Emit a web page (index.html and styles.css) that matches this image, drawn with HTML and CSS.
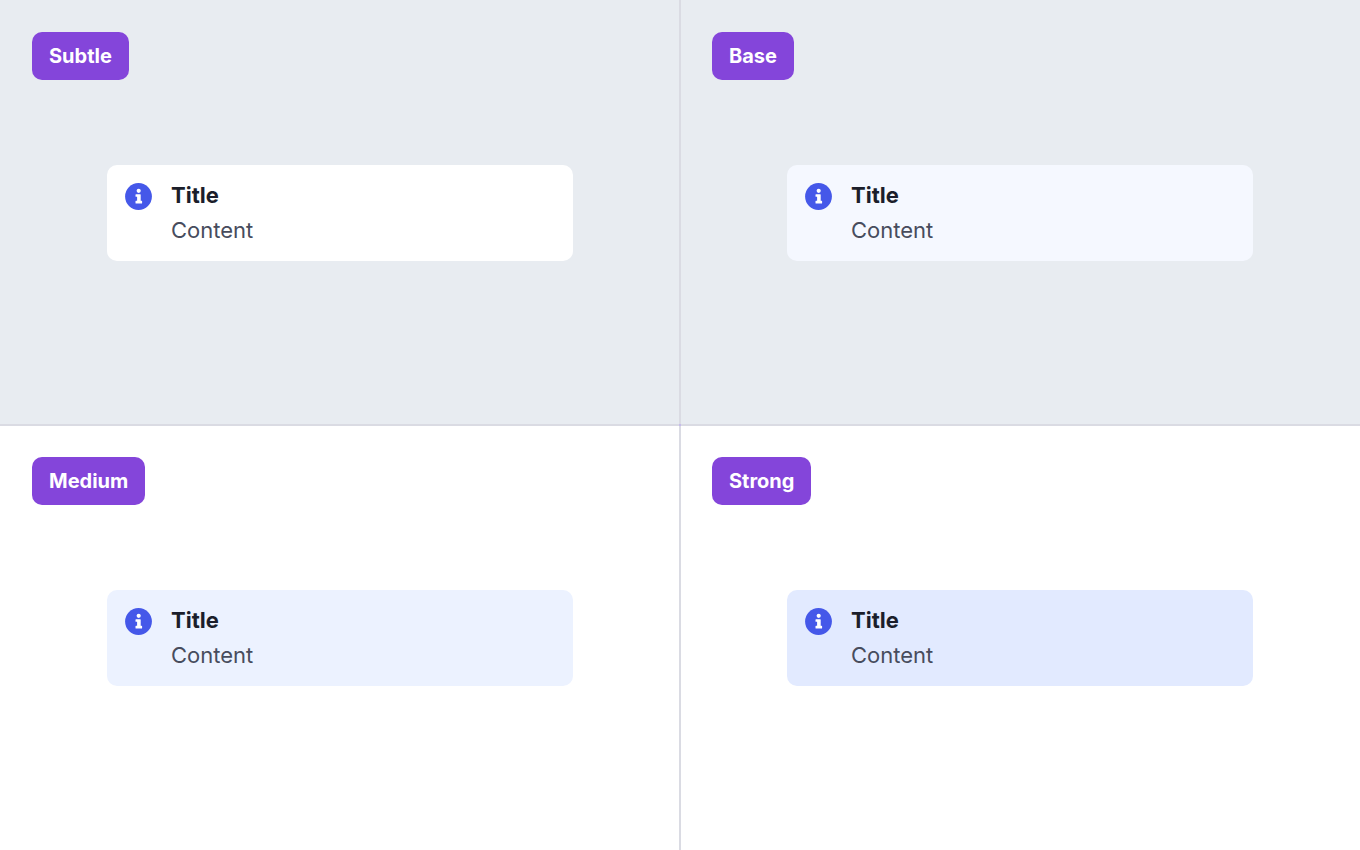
FILE: index.html
```html
<!DOCTYPE html>
<html lang="en">
<head>
<meta charset="utf-8">
<title>Alert emphasis levels</title>
<link rel="stylesheet" href="styles.css">
</head>
<body>
<svg class="sprite" aria-hidden="true">
  <symbol id="info" viewBox="0 0 27 27">
    <circle class="disc" cx="13.5" cy="13.5" r="13.4"/>
    <circle class="mark" cx="13.7" cy="7.8" r="2.1"/>
    <path class="mark" d="M11 11.2h4.2a.5.5 0 0 1 .5.5v6.1h.9a.5.5 0 0 1 .5.5v1.6a.5.5 0 0 1-.5.5H11a.5.5 0 0 1-.5-.5v-1.6a.5.5 0 0 1 .5-.5h1.1V13.8H11a.5.5 0 0 1-.5-.5v-1.6a.5.5 0 0 1 .5-.5z"/>
  </symbol>
</svg>
<main class="grid">
  <section class="cell cell-shaded">
    <h2 class="tag">Subtle</h2>
    <div class="alert alert-subtle">
      <svg class="icon" aria-hidden="true"><use href="#info"/></svg>
      <div class="text"><h3 class="title">Title</h3><p class="content">Content</p></div>
    </div>
  </section>
  <section class="cell cell-shaded">
    <h2 class="tag">Base</h2>
    <div class="alert alert-base">
      <svg class="icon" aria-hidden="true"><use href="#info"/></svg>
      <div class="text"><h3 class="title">Title</h3><p class="content">Content</p></div>
    </div>
  </section>
  <section class="cell">
    <h2 class="tag">Medium</h2>
    <div class="alert alert-medium">
      <svg class="icon" aria-hidden="true"><use href="#info"/></svg>
      <div class="text"><h3 class="title">Title</h3><p class="content">Content</p></div>
    </div>
  </section>
  <section class="cell">
    <h2 class="tag">Strong</h2>
    <div class="alert alert-strong">
      <svg class="icon" aria-hidden="true"><use href="#info"/></svg>
      <div class="text"><h3 class="title">Title</h3><p class="content">Content</p></div>
    </div>
  </section>
</main>
</body>
</html>
```
FILE: styles.css
```css
* {
  box-sizing: border-box;
}

body {
  margin: 0;
  font-family: Inter, "Liberation Sans", sans-serif;
  background: #fff;
}

h2, h3, p {
  margin: 0;
}

.sprite {
  position: absolute;
  width: 0;
  height: 0;
}

.grid {
  position: relative;
  display: grid;
  grid-template-columns: 1fr 1fr;
  grid-template-rows: 1fr 1fr;
  min-height: 100vh;
}

/* Divider lines drawn over the seams between cells */
.grid::before,
.grid::after {
  content: "";
  position: absolute;
  background: #dadbe3;
}

.grid::before {
  top: 0;
  bottom: 0;
  left: calc(50% - 1px);
  width: 2px;
}

/* The crossing point carries a violet accent */
.grid::after {
  left: 0;
  right: 0;
  top: calc(50% - 1px);
  height: 2px;
  background: linear-gradient(#c6bbec, #c6bbec) center / 2px 2px no-repeat #dadbe3;
}

.cell {
  display: flex;
  flex-direction: column;
  padding: 32px;
}

.cell-shaded {
  background: #e8ecf1;
}

.tag {
  align-self: flex-start;
  padding: 8px 17px;
  border-radius: 10px;
  background: #8445da;
  color: #fff;
  font-size: 20px;
  font-weight: 700;
  line-height: 32px;
}

.alert {
  display: flex;
  gap: 19px;
  margin: 85px 75px 0;
  padding: 12px 18px 14px;
  border-radius: 10px;
}

.alert-subtle {
  background: #fff;
}

.alert-base {
  background: #f5f8ff;
}

.alert-medium {
  background: #ecf2ff;
}

.alert-strong {
  background: #e2eaff;
}

.icon {
  flex: none;
  width: 27px;
  height: 27px;
  margin-top: 6px;
}

.disc {
  fill: #4558e9;
}

.mark {
  fill: #fff;
}

.title {
  color: #1b1e2b;
  font-size: 22px;
  font-weight: 700;
  line-height: 36px;
}

.content {
  color: #474c5d;
  font-size: 22px;
  line-height: 34px;
}
```
